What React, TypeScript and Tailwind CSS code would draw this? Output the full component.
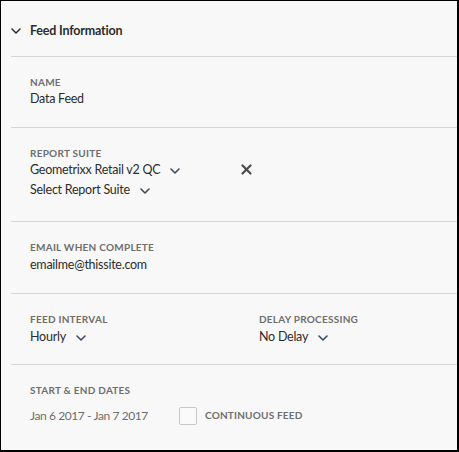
import React from "react";

function Chevron({ className = "" }: { className?: string }) {
  return (
    <svg width="10" height="6" viewBox="0 0 10 6" className={className}>
      <path d="M1 1l4 4 4-4" fill="none" stroke="#3f4a5a" strokeWidth="1.6" strokeLinecap="round" strokeLinejoin="round" />
    </svg>
  );
}

function Label({ children }: { children: React.ReactNode }) {
  return (
    <div className="text-[10px] leading-[12px] font-bold tracking-[0.25px] text-[#6e6e6e] uppercase">
      {children}
    </div>
  );
}

function Value({ children, chevron }: { children: React.ReactNode; chevron?: boolean }) {
  return (
    <div className="flex items-center gap-[10px] text-[12.5px] tracking-[-0.25px] leading-[19px] text-[#2c2c2c]">
      <span>{children}</span>
      {chevron && <Chevron className="mt-[2px]" />}
    </div>
  );
}

function Divider() {
  return <div className="ml-[10px] h-px bg-[#d6d6d6]" />;
}

export default function App() {
  return (
    <div
      className="w-[459px] h-[452px] bg-[#f8f8f8] border-l border-t border-r-2 border-b-2 border-black overflow-hidden"
      style={{ fontFamily: "Lato, 'Open Sans', sans-serif" }}
    >
      {/* Header */}
      <div className="h-[55px] flex items-center gap-[9px] pl-[10px] pt-[5px]">
        <svg width="10" height="6" viewBox="0 0 10 6">
          <path d="M1 1l4 4 4-4" fill="none" stroke="#2c2c2c" strokeWidth="1.5" strokeLinecap="round" strokeLinejoin="round" />
        </svg>
        <span className="text-[12.5px] tracking-[-0.2px] font-bold text-[#2c2c2c]">Feed Information</span>
      </div>
      <Divider />

      {/* Name */}
      <div className="h-[70px] pl-[29px] pt-[19px]">
        <Label>Name</Label>
        <div className="mt-[1px]">
          <Value>Data Feed</Value>
        </div>
      </div>
      <Divider />

      {/* Report suite */}
      <div className="h-[93px] pl-[29px] pt-[19px]">
        <Label>Report Suite</Label>
        <div className="mt-[1px] flex items-center">
          <div className="w-[211px]">
            <Value chevron>Geometrixx Retail v2 QC</Value>
          </div>
          <svg width="11" height="11" viewBox="0 0 11 11">
            <path d="M1.5 1.5l8 8M9.5 1.5l-8 8" stroke="#4b4b4b" strokeWidth="2.2" strokeLinecap="round" />
          </svg>
        </div>
        <div className="mt-[1px]">
          <Value chevron>Select Report Suite</Value>
        </div>
      </div>
      <Divider />

      {/* Email */}
      <div className="h-[71px] pl-[29px] pt-[19px]">
        <Label>Email When Complete</Label>
        <div className="mt-[2px]">
          <Value>emailme@thissite.com</Value>
        </div>
      </div>
      <Divider />

      {/* Interval / delay */}
      <div className="h-[70px] pl-[29px] pt-[19px] flex">
        <div className="w-[229px]">
          <Label>Feed Interval</Label>
          <div className="mt-[2px]">
            <Value chevron>Hourly</Value>
          </div>
        </div>
        <div>
          <Label>Delay Processing</Label>
          <div className="mt-[2px]">
            <Value chevron>No Delay</Value>
          </div>
        </div>
      </div>
      <Divider />

      {/* Dates */}
      <div className="pl-[29px] pt-[19px]">
        <Label>Start &amp; End Dates</Label>
        <div className="mt-[10px] flex items-center">
          <span className="w-[149px] text-[12px] tracking-[-0.4px] leading-[19px] text-[#6e6e6e]">Jan 6 2017 - Jan 7 2017</span>
          <span className="w-[18px] h-[18px] border border-[#c8c8c8] bg-[#fafafa] rounded-[2px]" />
          <span className="ml-[8px] text-[10px] font-bold tracking-[0.2px] text-[#6e6e6e] uppercase">Continuous Feed</span>
        </div>
      </div>
    </div>
  );
}
